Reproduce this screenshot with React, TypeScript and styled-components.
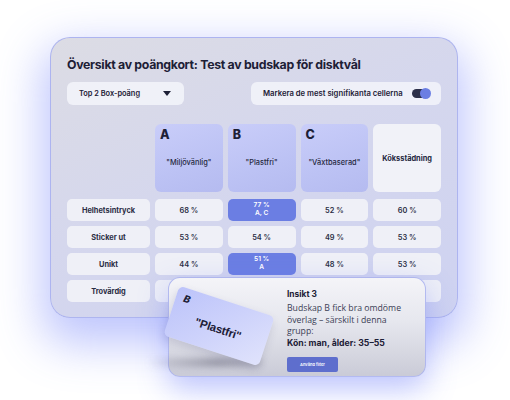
import React from 'react';
import styled, { createGlobalStyle } from 'styled-components';

const ink = '#1d2036';
const accent = '#6b7ee3';

const GlobalStyle = createGlobalStyle`
  html, body { margin: 0; padding: 0; background: #ffffff; }
  body { font-family: Inter, "Liberation Sans", sans-serif; color: ${ink}; }
  * { box-sizing: border-box; }
`;

const Stage = styled.div`
  width: 510px;
  height: 400px;
  overflow: hidden;
  padding: 37px 0 0 50px;
`;

const Board = styled.section`
  position: relative;
  width: 408px;
  height: 281px;
  padding: 18px 16px 0 16px;
  border-radius: 20px;
  border: 1px solid rgba(168, 176, 240, 0.9);
  background: linear-gradient(155deg, #dcdce4 0%, #d5d7ed 45%, #ced2f1 100%);
  box-shadow: 0 18px 45px 8px rgba(112, 128, 250, 0.45);
`;

const Title = styled.h1`
  margin: 0 0 8px;
  font-size: 12.3px;
  line-height: 18px;
  font-weight: 700;
  letter-spacing: -0.3px;
  color: ${ink};
`;

const Controls = styled.div`
  display: flex;
  justify-content: space-between;
  height: 23px;
`;

const Pill = styled.div<{ $width: number }>`
  display: flex;
  align-items: center;
  justify-content: space-between;
  width: ${(p) => p.$width}px;
  padding: 0 11px 0 12px;
  border-radius: 6px;
  background: rgba(243, 244, 250, 0.85);
  font-size: 7.4px;
  font-weight: 600;
  color: ${ink};
`;

const ToggleLabel = styled.span`
  font-size: 7.7px;
`;

const Caret = styled.span`
  width: 0;
  height: 0;
  margin-right: 2px;
  border-left: 4px solid transparent;
  border-right: 4px solid transparent;
  border-top: 5px solid ${ink};
`;

const Switch = styled.span`
  position: relative;
  width: 18px;
  height: 9px;
  border-radius: 5px;
  background: #2b2e48;
  &::after {
    content: '';
    position: absolute;
    right: -1px;
    top: -1px;
    width: 11px;
    height: 11px;
    border-radius: 50%;
    background: ${accent};
  }
`;

const Grid = styled.div`
  display: grid;
  width: 374px;
  margin-top: 19px;
  grid-template-columns: 83px repeat(4, 1fr);
  grid-template-rows: 70px repeat(4, 22px);
  column-gap: 5px;
  row-gap: 5px;
`;

const HeadCell = styled.div<{ $plain?: boolean }>`
  display: flex;
  flex-direction: column;
  height: 68px;
  padding: 4px 5px 0;
  border-radius: 6px;
  background: ${(p) =>
    p.$plain
      ? '#f1f2f8'
      : 'linear-gradient(160deg, #c9cdf9 0%, #bcc2f4 60%, #b5bbf0 100%)'};
`;

const Letter = styled.span`
  font-size: 12.5px;
  line-height: 14px;
  font-weight: 800;
  color: ${ink};
`;

const HeadLabel = styled.span<{ $bold?: boolean }>`
  flex: 1;
  display: flex;
  align-items: center;
  justify-content: center;
  padding-bottom: ${(p) => (p.$bold ? 4 : 10)}px;
  font-size: 7.4px;
  font-weight: ${(p) => (p.$bold ? 700 : 500)};
  color: #25283f;
  white-space: nowrap;
`;

const Cell = styled.div<{ $hot?: boolean; $label?: boolean }>`
  display: flex;
  flex-direction: column;
  align-items: center;
  justify-content: center;
  border-radius: 5px;
  background: ${(p) => (p.$hot ? accent : '#eff0f7')};
  color: ${(p) => (p.$hot ? '#ffffff' : '#2a2d44')};
  font-size: ${(p) => (p.$hot ? 6.6 : 7.4)}px;
  line-height: ${(p) => (p.$hot ? '7.6px' : 'normal')};
  font-weight: ${(p) => (p.$label ? 700 : 600)};
`;

const Insight = styled.aside`
  position: absolute;
  left: 117px;
  top: 239px;
  width: 258px;
  height: 100px;
  display: grid;
  grid-template-columns: 118px 1fr;
  border-radius: 12px;
  border: 1px solid rgba(172, 180, 240, 0.9);
  background: linear-gradient(180deg, #f4f4f8 0%, #e6e7ee 45%, #cacbd7 100%);
  box-shadow: 0 12px 30px rgba(112, 128, 250, 0.45);
  &::before {
    content: '';
    position: absolute;
    left: -22px;
    top: 80px;
    width: 115px;
    height: 9px;
    border-radius: 4px;
    background: linear-gradient(90deg, rgba(90, 90, 110, 0) 0%, rgba(90, 90, 110, 0.45) 60%, rgba(90, 90, 110, 0.2) 100%);
    filter: blur(3px);
  }
`;

const MessageCard = styled.div`
  position: absolute;
  left: 0;
  top: 22px;
  width: 100px;
  height: 52px;
  padding: 5px 8px;
  border-radius: 5px;
  transform: rotate(18deg);
  background: linear-gradient(135deg, #bcc3fa 0%, #cdd2fb 50%, #e0e3fc 100%);
  box-shadow: 0 4px 8px rgba(80, 80, 120, 0.18);
  display: flex;
  flex-direction: column;
`;

const CardLetter = styled.span`
  font-size: 10px;
  font-weight: 800;
  font-style: italic;
  line-height: 11px;
  color: ${ink};
`;

const CardQuote = styled.span`
  flex: 1;
  display: flex;
  align-items: center;
  justify-content: center;
  padding-bottom: 6px;
  font-family: "Liberation Sans", Arial, sans-serif;
  font-size: 11.5px;
  font-weight: 600;
  letter-spacing: -0.2px;
  color: ${ink};
`;

const InsightBody = styled.div`
  grid-column: 2;
  padding: 10px 12px 0 0;
  font-family: "Open Sans", "Noto Sans", sans-serif;
  color: #3b3e55;
`;

const InsightTitle = styled.div`
  font-family: Inter, sans-serif;
  font-size: 8.4px;
  line-height: 12px;
  font-weight: 700;
  color: ${ink};
  margin-bottom: 3px;
`;

const InsightText = styled.p`
  margin: 0;
  font-size: 8.7px;
  line-height: 11.5px;
  strong {
    display: block;
    font-family: Inter, sans-serif;
    font-weight: 700;
    color: ${ink};
  }
`;

const FilterButton = styled.button`
  margin-top: 5px;
  width: 51px;
  height: 15px;
  border: 0;
  border-radius: 2px;
  background: #5e6ecd;
  color: #ffffff;
  font-family: Inter, sans-serif;
  font-size: 4px;
  font-weight: 600;
  padding: 0;
`;

type Row = { label: string; values: { main: string; sub?: string; hot?: boolean }[] };

const columns = [
  { letter: 'A', label: '"Miljövänlig"' },
  { letter: 'B', label: '"Plastfri"' },
  { letter: 'C', label: '"Växtbaserad"' },
];

const rows: Row[] = [
  {
    label: 'Helhetsintryck',
    values: [{ main: '68 %' }, { main: '77 %', sub: 'A, C', hot: true }, { main: '52 %' }, { main: '60 %' }],
  },
  {
    label: 'Sticker ut',
    values: [{ main: '53 %' }, { main: '54 %' }, { main: '49 %' }, { main: '53 %' }],
  },
  {
    label: 'Unikt',
    values: [{ main: '44 %' }, { main: '51 %', sub: 'A', hot: true }, { main: '48 %' }, { main: '53 %' }],
  },
  {
    label: 'Trovärdig',
    values: [{ main: '' }, { main: '' }, { main: '' }, { main: '' }],
  },
];

export default function App() {
  return (
    <>
      <GlobalStyle />
      <Stage>
        <Board>
          <Title>Översikt av poängkort: Test av budskap för disktvål</Title>
          <Controls>
            <Pill $width={117}>
              Top 2 Box-poäng
              <Caret />
            </Pill>
            <Pill $width={190}>
              <ToggleLabel>Markera de mest signifikanta cellerna</ToggleLabel>
              <Switch />
            </Pill>
          </Controls>
          <Grid>
            <div />
            {columns.map((c) => (
              <HeadCell key={c.letter}>
                <Letter>{c.letter}</Letter>
                <HeadLabel>{c.label}</HeadLabel>
              </HeadCell>
            ))}
            <HeadCell $plain>
              <HeadLabel $bold>Köksstädning</HeadLabel>
            </HeadCell>
            {rows.map((r) => (
              <React.Fragment key={r.label}>
                <Cell $label>{r.label}</Cell>
                {r.values.map((v, i) => (
                  <Cell key={i} $hot={v.hot}>
                    <span>{v.main}</span>
                    {v.sub && <span>{v.sub}</span>}
                  </Cell>
                ))}
              </React.Fragment>
            ))}
          </Grid>
          <Insight>
            <MessageCard>
              <CardLetter>B</CardLetter>
              <CardQuote>"Plastfri"</CardQuote>
            </MessageCard>
            <InsightBody>
              <InsightTitle>Insikt 3</InsightTitle>
              <InsightText>
                Budskap B fick bra omdöme överlag – särskilt i denna grupp:
                <strong>Kön: man, ålder: 35–55</strong>
              </InsightText>
              <FilterButton>Använd filter</FilterButton>
            </InsightBody>
          </Insight>
        </Board>
      </Stage>
    </>
  );
}
